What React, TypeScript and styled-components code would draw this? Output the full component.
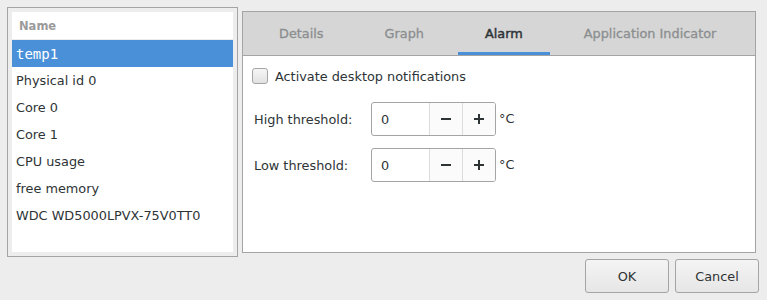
import React from "react";
import styled, { createGlobalStyle } from "styled-components";

const Global = createGlobalStyle`
  html, body { margin: 0; padding: 0; background: #ededed; }
  body { font-family: "DejaVu Sans", "Liberation Sans", sans-serif; font-size: 12.85px; color: #2e3436; }
  * { box-sizing: border-box; }
`;

const Page = styled.div`
  width: 767px;
  height: 300px;
  padding: 7px 8px 0 7px;
  display: flex;
  flex-direction: column;
  background: #ededed;
`;

const Content = styled.div`
  display: flex;
  align-items: flex-start;
  gap: 4px;
`;

const Frame = styled.div`
  width: 231px;
  height: 250px;
  border: 1px solid #a4a4a4;
  padding: 4px;
  background: #ededed;
`;

const List = styled.div`
  background: #ffffff;
  height: 100%;
  display: flex;
  flex-direction: column;
`;

const HeaderCell = styled.div`
  height: 28px;
  padding-left: 7px;
  display: flex;
  align-items: center;
  font-weight: bold;
  font-size: 11.5px;
  color: #9a9a9a;
  border-bottom: 1px solid #ececec;
`;

const Row = styled.div<{ $selected?: boolean }>`
  height: 27px;
  padding-left: 4px;
  display: flex;
  align-items: center;
  background: ${(p) => (p.$selected ? "#4a90d9" : "transparent")};
  color: ${(p) => (p.$selected ? "#ffffff" : "#2e3436")};
  font-family: ${(p) =>
    p.$selected ? '"DejaVu Sans Mono", monospace' : '"DejaVu Sans", sans-serif'};
  font-size: ${(p) => (p.$selected ? "14px" : "12.85px")};
`;

const Notebook = styled.div`
  margin-top: 4px;
  width: 514px;
  height: 242px;
  border: 1px solid #a4a4a4;
  display: flex;
  flex-direction: column;
  background: #ffffff;
`;

const TabBar = styled.div`
  height: 44px;
  background: #d6d6d6;
  border-bottom: 1px solid #a4a4a4;
  display: flex;
  padding-left: 9px;
  gap: 7px;
`;

const Tab = styled.div<{ $active?: boolean }>`
  padding: 3px 27px 0;
  display: flex;
  align-items: center;
  color: ${(p) => (p.$active ? "#2e3436" : "#8b8e8f")};
  border-bottom: 3px solid ${(p) => (p.$active ? "#4a90d9" : "transparent")};
  font-weight: normal;
  -webkit-text-stroke: ${(p) => (p.$active ? "0.45px" : "0.3px")} currentColor;
`;

const Body = styled.div`
  flex: 1;
  padding: 12px 11px;
  display: flex;
  flex-direction: column;
`;

const CheckRow = styled.label`
  display: flex;
  align-items: center;
  gap: 7px;
  height: 16px;
  margin-left: -2px;
`;

const CheckBox = styled.span`
  width: 16px;
  height: 16px;
  border: 1px solid #a4a4a4;
  border-radius: 3px;
  background: linear-gradient(#f6f6f6, #e2e2e2);
`;

const Grid = styled.div`
  margin-top: 18px;
  display: grid;
  grid-template-columns: 117px auto auto;
  row-gap: 12px;
  align-items: center;
  justify-content: start;
`;

const Spin = styled.div`
  display: flex;
  height: 34px;
  border: 1px solid #a4a4a4;
  border-radius: 3px;
  overflow: hidden;
  background: #ffffff;
`;

const SpinEntry = styled.div`
  width: 57px;
  padding-left: 9px;
  display: flex;
  align-items: center;
`;

const SpinButton = styled.div`
  width: 33px;
  border-left: 1px solid #dcdcdc;
  display: flex;
  align-items: center;
  justify-content: center;
  background: #fbfbfb;
  color: #2e3436;
`;

const Unit = styled.span`
  margin-left: 3px;
  margin-top: -2px;
`;

const Buttons = styled.div`
  margin-top: 2px;
  display: flex;
  justify-content: flex-end;
  gap: 6px;
`;

const Button = styled.div`
  width: 84px;
  height: 34px;
  border: 1px solid #a4a4a4;
  border-radius: 3px;
  background: linear-gradient(#f4f4f4, #e6e6e6);
  display: flex;
  align-items: center;
  justify-content: center;
`;

const Minus = () => (
  <svg width="12" height="12" viewBox="0 0 12 12">
    <rect x="1" y="5" width="10" height="2" fill="#2e3436" />
  </svg>
);
const Plus = () => (
  <svg width="12" height="12" viewBox="0 0 12 12">
    <rect x="1" y="5" width="10" height="2" fill="#2e3436" />
    <rect x="5" y="1" width="2" height="10" fill="#2e3436" />
  </svg>
);

const items = [
  "temp1",
  "Physical id 0",
  "Core 0",
  "Core 1",
  "CPU usage",
  "free memory",
  "WDC WD5000LPVX-75V0TT0",
];

const SpinField = () => (
  <Spin>
    <SpinEntry>0</SpinEntry>
    <SpinButton>
      <Minus />
    </SpinButton>
    <SpinButton>
      <Plus />
    </SpinButton>
  </Spin>
);

export default function App() {
  return (
    <>
      <Global />
      <Page>
        <Content>
          <Frame>
            <List>
              <HeaderCell>Name</HeaderCell>
              {items.map((it, i) => (
                <Row key={it} $selected={i === 0}>
                  {it}
                </Row>
              ))}
            </List>
          </Frame>
          <Notebook>
            <TabBar>
              <Tab>Details</Tab>
              <Tab>Graph</Tab>
              <Tab $active>Alarm</Tab>
              <Tab>Application Indicator</Tab>
            </TabBar>
            <Body>
              <CheckRow>
                <CheckBox />
                Activate desktop notifications
              </CheckRow>
              <Grid>
                <span>High threshold:</span>
                <SpinField />
                <Unit>°C</Unit>
                <span>Low threshold:</span>
                <SpinField />
                <Unit>°C</Unit>
              </Grid>
            </Body>
          </Notebook>
        </Content>
        <Buttons>
          <Button>OK</Button>
          <Button>Cancel</Button>
        </Buttons>
      </Page>
    </>
  );
}
